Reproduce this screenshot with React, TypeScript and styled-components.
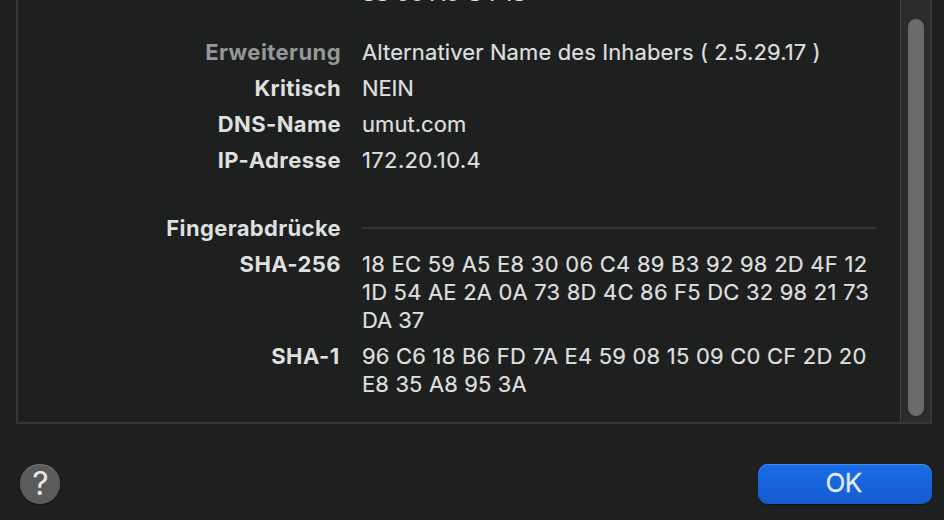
import React from "react";
import styled, { createGlobalStyle } from "styled-components";

const GlobalStyle = createGlobalStyle`
  * { box-sizing: border-box; }
  body { margin: 0; background: #1e201f; }
`;

const Sheet = styled.main`
  display: flex;
  flex-direction: column;
  width: 944px;
  height: 520px;
  padding: 0 12px 16px 16px;
  overflow: hidden;
  background: #1e201f;
  color: #dedfdf;
  font-family: Inter, "Liberation Sans", sans-serif;
`;

const Panel = styled.section`
  display: flex;
  width: 916px;
  height: 424px;
  flex: none;
  border: 2px solid #363838;
  border-top: 0;
  overflow: hidden;
`;

const Details = styled.dl`
  display: grid;
  grid-template-columns: 323px 514px;
  column-gap: 21px;
  row-gap: 8px;
  align-content: start;
  width: 882px;
  flex: none;
  margin: -21px 0 0;
`;

const Label = styled.dt<{ $muted?: boolean; $spacing: number; $before?: number; $inset?: number }>`
  margin-top: ${(p) => p.$before ?? 0}px;
  padding-right: ${(p) => p.$inset ?? 0}px;
  text-align: right;
  font-size: 22px;
  font-weight: 700;
  line-height: 28px;
  letter-spacing: ${(p) => p.$spacing}px;
  color: ${(p) => (p.$muted ? "#969797" : "#dedfdf")};
`;

const Value = styled.dd<{ $before?: number }>`
  display: flex;
  flex-direction: column;
  justify-content: center;
  min-height: 28px;
  margin: ${(p) => p.$before ?? 0}px 0 0;
`;

const Line = styled.span<{ $spacing: number }>`
  font-size: 22px;
  line-height: 28px;
  letter-spacing: ${(p) => p.$spacing}px;
  white-space: pre;
  -webkit-text-stroke: 0.2px #dedfdf;
`;

const Rule = styled.hr`
  width: 100%;
  height: 2px;
  margin: 0;
  border: 0;
  background: #343636;
`;

const ScrollTrack = styled.div`
  display: flex;
  width: 30px;
  flex: none;
  padding: 19px 0 6px 7px;
  border-left: 1px solid #404141;
  background: #2c2c2c;
`;

const ScrollThumb = styled.div`
  width: 16px;
  border-radius: 8px;
  background: #6b6b6b;
`;

const Footer = styled.footer`
  display: flex;
  align-items: center;
  justify-content: space-between;
  margin-top: 40px;
  padding-left: 4px;
`;

const HelpButton = styled.button`
  display: flex;
  align-items: center;
  justify-content: center;
  width: 40px;
  height: 40px;
  padding: 0 0 0 1px;
  border: 0;
  border-radius: 50%;
  background: #5a5b5b;
  box-shadow: inset 0 1px 0 #717272, 0 1px 1px #111;
  color: #e7e7e7;
  font: 400 32px/40px Inter, sans-serif;
`;

const OkButton = styled.button`
  width: 174px;
  height: 40px;
  padding: 0 3px 2px 0;
  border: 0;
  border-radius: 10px;
  background: linear-gradient(#196de8, #155bce);
  box-shadow: inset 0 1px 0 #4388ed, 0 1px 1px #111;
  color: #e1eafa;
  font: 400 26px/38px Inter, sans-serif;
  letter-spacing: -0.7px;
  -webkit-text-stroke: 0.3px #e1eafa;
`;

type Entry = {
  label: string;
  labelSpacing: number;
  lines: [string, number][];
  muted?: boolean;
  before?: number;
  inset?: number;
};

const entries: Entry[] = [
  { label: "", labelSpacing: 0, lines: [["88 06 A0 C4 18", 0.2]] },
  { label: "Erweiterung", labelSpacing: 0.42, muted: true, before: 23, lines: [["Alternativer Name des Inhabers ( 2.5.29.17 )", 0.116]] },
  { label: "Kritisch", labelSpacing: 0.33, lines: [["NEIN", -0.169]] },
  { label: "DNS-Name", labelSpacing: 0.39, lines: [["umut.com", 0.06]] },
  { label: "IP-Adresse", labelSpacing: 0.47, lines: [["172.20.10.4", 0.357]] },
  { label: "Fingerabdrücke", labelSpacing: 0.353, before: 32, lines: [] },
  {
    label: "SHA-256",
    labelSpacing: 0.406,
    lines: [
      ["18 EC 59 A5 E8 30 06 C4 89 B3 92 98 2D 4F 12", 0.245],
      ["1D 54 AE 2A 0A 73 8D 4C 86 F5 DC 32 98 21 73", 0.195],
      ["DA 37", -0.095],
    ],
  },
  {
    label: "SHA-1",
    labelSpacing: 0.371,
    inset: 1.5,
    lines: [
      ["96 C6 18 B6 FD 7A E4 59 08 15 09 C0 CF 2D 20", 0.201],
      ["E8 35 A8 95 3A", 0.12],
    ],
  },
];

export default function App() {
  return (
    <Sheet>
      <GlobalStyle />
      <Panel>
        <Details>
          {entries.map((e, i) => (
            <React.Fragment key={i}>
              <Label $muted={e.muted} $before={e.before} $inset={e.inset} $spacing={e.labelSpacing}>{e.label}</Label>
              <Value $before={e.before}>
                {e.lines.length === 0 && <Rule />}
                {e.lines.map(([text, spacing]) => (
                  <Line key={text} $spacing={spacing}>{text}</Line>
                ))}
              </Value>
            </React.Fragment>
          ))}
        </Details>
        <ScrollTrack>
          <ScrollThumb />
        </ScrollTrack>
      </Panel>
      <Footer>
        <HelpButton>?</HelpButton>
        <OkButton>OK</OkButton>
      </Footer>
    </Sheet>
  );
}
